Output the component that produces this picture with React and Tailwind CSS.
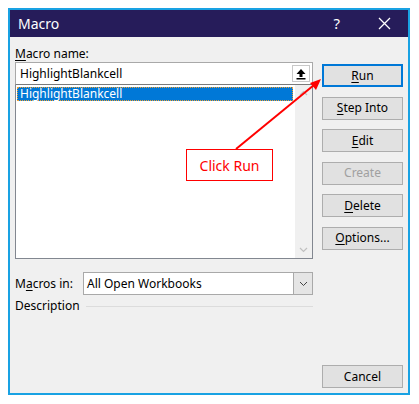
import React from "react";

const F = { fontFamily: '"Noto Sans", "Open Sans", sans-serif' };

function Btn({ children, disabled, focused }) {
  return (
    <div
      className={
        "h-[23px] w-[81px] flex items-center justify-center text-[12px] leading-none bg-[#e1e1e1] " +
        (focused ? "border-2 border-[#0078d7]" : "border border-[#adadad]") +
        (disabled ? " text-[#a0a0a0]" : " text-black")
      }
    >
      {children}
    </div>
  );
}

export default function App() {
  return (
    <div className="w-[419px] h-[404px] bg-white pt-[8px] pl-[8px] relative" style={F}>
      <div className="w-[402px] h-[387px] border-2 border-[#19a2e3] bg-[#f0f0f0] flex flex-col">
        <div className="h-[27px] bg-[#261c5a] flex items-center text-white shrink-0">
          <span className="ml-[8px] text-[14px]">Macro</span>
          <span className="ml-auto text-[15px] mr-[38px]">?</span>
          <svg width="13" height="13" viewBox="0 0 13 13" className="mr-[17px]">
            <path d="M1 1L12 12M12 1L1 12" stroke="white" strokeWidth="1.3" />
          </svg>
        </div>
        <div className="flex flex-1 pl-[5px] pr-[5px]">
          <div className="w-[298px] flex flex-col">
            <div className="mt-[9px] h-[16px] text-[12px] leading-[16px] text-black">
              <span className="underline underline-offset-2">M</span>acro name:
            </div>
            <div className="h-[23px] bg-white border border-[#a9a9a9] border-b-[#7a7a7a] flex items-center">
              <span className="ml-[4px] text-[12px] text-black">HighlightBlankcell</span>
              <div className="ml-auto mr-[2px] w-[18px] h-[17px] bg-white border border-[#c8c8c8] flex items-center justify-center">
                <svg width="12" height="12" viewBox="0 0 12 12">
                  <path d="M6 1L1.5 6H4.5V9H7.5V6H10.5Z" fill="black" />
                  <rect x="1.5" y="10" width="9" height="1.5" fill="black" />
                </svg>
              </div>
            </div>
            <div className="h-[174px] bg-white border border-[#828790] border-t-0 flex">
              <div className="flex-1 pt-[2px] pl-[1px] pr-[2px]">
                <div className="h-[14px] bg-[#0078d7] border border-dotted border-[#f0a030] flex items-center">
                  <span className="ml-[2px] text-[12px] leading-none text-white">HighlightBlankcell</span>
                </div>
              </div>
              <div className="w-[17px] bg-[#f0f0f0] flex flex-col items-center justify-between py-[5px]">
                <svg width="9" height="6" viewBox="0 0 9 6">
                  <path d="M1 5L4.5 1.5L8 5" stroke="#c0c0c0" fill="none" strokeWidth="1.2" />
                </svg>
                <svg width="9" height="6" viewBox="0 0 9 6">
                  <path d="M1 1L4.5 4.5L8 1" stroke="#c0c0c0" fill="none" strokeWidth="1.2" />
                </svg>
              </div>
            </div>
            <div className="mt-[13px] flex items-center h-[23px]">
              <span className="w-[68px] text-[12px] text-black">
                M<span className="underline underline-offset-2">a</span>cros in:
              </span>
              <div className="flex-1 h-[23px] bg-white border border-[#a9a9a9] flex items-center">
                <span className="ml-[3px] text-[12px] text-black">All Open Workbooks</span>
                <div className="ml-auto w-[19px] h-full bg-[#e5e5e5] border-l border-[#a9a9a9] flex items-center justify-center">
                  <svg width="9" height="6" viewBox="0 0 9 6">
                    <path d="M1 1L4.5 4.5L8 1" stroke="#444" fill="none" strokeWidth="1" />
                  </svg>
                </div>
              </div>
            </div>
            <div className="mt-[2px] flex items-center">
              <span className="text-[12px] text-black">Description</span>
              <div className="flex-1 ml-[6px] h-px bg-[#dcdcdc]" />
            </div>
          </div>
          <div className="ml-auto w-[81px] flex flex-col">
            <div className="mt-[27px] flex flex-col gap-[9.5px]">
              <Btn focused>
                <span className="underline underline-offset-2">R</span>un
              </Btn>
              <Btn>
                <span className="underline underline-offset-2">S</span>tep Into
              </Btn>
              <Btn>
                <span className="underline underline-offset-2">E</span>dit
              </Btn>
              <Btn disabled>Create</Btn>
              <Btn>
                <span className="underline underline-offset-2">D</span>elete
              </Btn>
              <Btn>
                <span className="underline underline-offset-2">O</span>ptions...
              </Btn>
            </div>
            <div className="mt-auto mb-[5px]">
              <Btn>Cancel</Btn>
            </div>
          </div>
        </div>
      </div>
      <svg className="absolute left-0 top-0" width="419" height="404" viewBox="0 0 419 404">
        <line x1="236" y1="149" x2="314" y2="85" stroke="#ff0000" strokeWidth="2" />
        <path d="M321 79L310 83L316 90Z" fill="#ff0000" />
      </svg>
      <div className="absolute left-[186px] top-[149px] w-[87px] h-[32px] bg-white border border-[#ff0000] flex items-center justify-center text-[14px] text-[#ff0000]">
        Click Run
      </div>
    </div>
  );
}
